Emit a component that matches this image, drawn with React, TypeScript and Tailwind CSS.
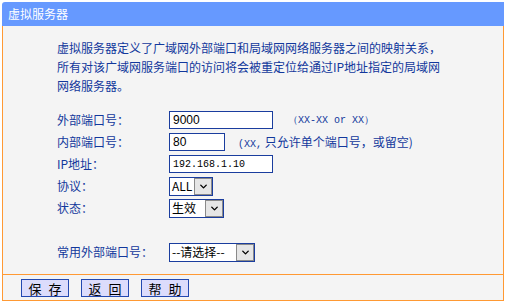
import { ChevronDown } from "lucide-react";

const cjk = "font-['SimSun','Noto_Sans_CJK_SC',sans-serif]";

function FakeSelect({ value, width }: { value: string; width: string }) {
  return (
    <div className={`flex h-[19px] ${width} items-stretch border border-[#1a3d9e] bg-white`}>
      <span className="flex flex-1 items-center pl-[2px] text-[12px] leading-none text-black">{value}</span>
      <span className="flex w-[18px] items-center justify-center border border-[#8a8a8a] bg-[#e6e6e6]">
        <ChevronDown className="h-[11px] w-[11px] text-black" strokeWidth={3} />
      </span>
    </div>
  );
}

function Row({ label, children }: { label: string; children: React.ReactNode }) {
  return (
    <div className="flex h-[22px] items-center">
      <span className="w-[112px] shrink-0">{label}</span>
      {children}
    </div>
  );
}

function Btn({ a, b }: { a: string; b: string }) {
  return (
    <button className="flex h-[18px] w-[48px] items-center justify-center gap-[7px] border border-[#2348b0] bg-[#dcdcfc] text-[13px] leading-none text-black">
      <span>{a}</span>
      <span>{b}</span>
    </button>
  );
}

export default function App() {
  return (
    <div className={`h-[303px] w-[506px] bg-white px-[2px] pt-[2px] ${cjk}`}>
      {/* Title bar */}
      <div className="flex h-[24px] w-[502px] items-center rounded-tl-[3px] bg-[#6699ff] pl-[6px] text-[12px] text-white">
        虚拟服务器
      </div>

      {/* Body */}
      <div className="h-[248px] border-x border-[#ff9933] bg-[#f4f4f4] pl-[54px] pt-[12px] text-[12px] text-[#12389c]">
        <p className="leading-[19px]">
          虚拟服务器定义了广域网外部端口和局域网网络服务器之间的映射关系，
          <br />
          所有对该广域网服务端口的访问将会被重定位给通过IP地址指定的局域网
          <br />
          网络服务器。
        </p>

        <div className="mt-[14px]">
          <Row label="外部端口号：">
            <input
              readOnly
              value="9000"
              className="h-[18px] w-[104px] border border-[#1a3d9e] bg-white px-[3px] font-['Liberation_Sans',sans-serif] text-[12px] text-black outline-none"
            />
            <span className="ml-[15px] font-['Liberation_Mono',monospace] text-[10px]">（XX-XX or XX）</span>
          </Row>
          <Row label="内部端口号：">
            <input
              readOnly
              value="80"
              className="h-[18px] w-[56px] border border-[#1a3d9e] bg-white px-[3px] font-['Liberation_Sans',sans-serif] text-[12px] text-black outline-none"
            />
            <span className="ml-[13px]">
              <span className="font-['Liberation_Mono',monospace] text-[10px]">(XX,</span> 只允许单个端口号，或留空)
            </span>
          </Row>
          <Row label="IP地址：">
            <input
              readOnly
              value="192.168.1.10"
              className="h-[18px] w-[104px] border border-[#1a3d9e] bg-white px-[3px] font-['Liberation_Mono',monospace] text-[10px] text-black outline-none"
            />
          </Row>
          <Row label="协议：">
            <FakeSelect value="ALL" width="w-[44px]" />
          </Row>
          <Row label="状态：">
            <FakeSelect value="生效" width="w-[55px]" />
          </Row>
          <div className="mt-[22px]">
            <Row label="常用外部端口号：">
              <FakeSelect value="--请选择--" width="w-[86px]" />
            </Row>
          </div>
        </div>
      </div>

      {/* Footer */}
      <div className="flex h-[27px] gap-[12px] border border-[#ff9933] bg-[#f4f4f4] pl-[18px] pt-[4px]">
        <Btn a="保" b="存" />
        <Btn a="返" b="回" />
        <Btn a="帮" b="助" />
      </div>
    </div>
  );
}
